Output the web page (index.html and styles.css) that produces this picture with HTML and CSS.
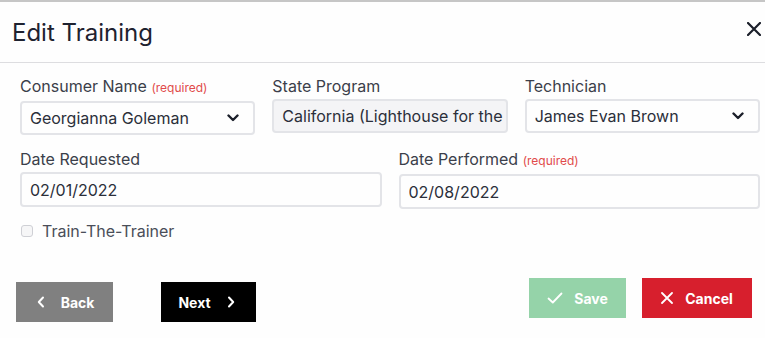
FILE: index.html
```html
<!DOCTYPE html>
<html>
<head>
<title>Edit Training</title>
<link rel="stylesheet" href="styles.css">
</head>
<body>
<div class="modal">
    <div class="modal-header">
        <h1 class="modal-title">Edit Training</h1>
        <button class="close" aria-label="Close">
            <svg width="14" height="14" viewBox="0 0 14 14"><path d="M1 1L13 13M13 1L1 13" stroke="#1b1f2a" stroke-width="2.2" stroke-linecap="round"/></svg>
        </button>
    </div>
    <div class="modal-body">
        <div class="row three">
            <div class="field">
                <label>Consumer Name <span class="req">(required)</span></label>
                <div class="control select">
                    <span>Georgianna Goleman</span>
                    <svg class="chev" width="12" height="8" viewBox="0 0 12 8"><path d="M1.5 1.5L6 6L10.5 1.5" fill="none" stroke="#1b1f2a" stroke-width="2.4" stroke-linecap="round" stroke-linejoin="round"/></svg>
                </div>
            </div>
            <div class="field">
                <label>State Program</label>
                <div class="control readonly"><span>California (Lighthouse for the</span></div>
            </div>
            <div class="field">
                <label>Technician</label>
                <div class="control select">
                    <span>James Evan Brown</span>
                    <svg class="chev" width="12" height="8" viewBox="0 0 12 8"><path d="M1.5 1.5L6 6L10.5 1.5" fill="none" stroke="#1b1f2a" stroke-width="2.4" stroke-linecap="round" stroke-linejoin="round"/></svg>
                </div>
            </div>
        </div>
        <div class="row two">
            <div class="field">
                <label>Date Requested</label>
                <div class="control tall"><span>02/01/2022</span></div>
            </div>
            <div class="field">
                <label>Date Performed <span class="req">(required)</span></label>
                <div class="control tall"><span>02/08/2022</span></div>
            </div>
        </div>
        <div class="check">
            <span class="box"></span>
            <span>Train-The-Trainer</span>
        </div>
    </div>
    <div class="modal-footer">
        <div class="nav">
            <button class="btn back">
                <svg width="8" height="12" viewBox="0 0 8 12"><path d="M6 1.5L1.8 6L6 10.5" fill="none" stroke="#fff" stroke-width="2" stroke-linecap="round" stroke-linejoin="round"/></svg>
                Back
            </button>
            <button class="btn next">
                Next
                <svg width="8" height="12" viewBox="0 0 8 12"><path d="M2 1.5L6.2 6L2 10.5" fill="none" stroke="#fff" stroke-width="2" stroke-linecap="round" stroke-linejoin="round"/></svg>
            </button>
        </div>
        <div class="actions">
            <button class="btn save">
                <svg width="16" height="12" viewBox="0 0 16 12"><path d="M1.5 6.5L5.8 10.5L14.5 1.5" fill="none" stroke="#fff" stroke-width="1.8" stroke-linecap="round" stroke-linejoin="round"/></svg>
                Save
            </button>
            <button class="btn cancel">
                <svg width="12" height="12" viewBox="0 0 12 12"><path d="M1 1L11 11M11 1L1 11" fill="none" stroke="#fff" stroke-width="1.8" stroke-linecap="round"/></svg>
                Cancel
            </button>
        </div>
    </div>
</div>
</body>
</html>
```

FILE: styles.css
```css
body {
    margin: 0;
    background: #fff;
    font-family: Inter, "Liberation Sans", sans-serif;
    color: #2b2f3a;
}
.modal {
    border-top: 2px solid #c6c6c6;
    height: 336px;
    background: #fefefe;
}
.modal-header {
    display: flex;
    align-items: center;
    justify-content: space-between;
    height: 60px;
    padding: 0 3px 0 12px;
    border-bottom: 1px solid #dddde0;
}
.modal-title {
    margin: 0;
    font-size: 24px;
    font-weight: 400;
    color: #1e2230;
}
.close {
    border: 0;
    background: none;
    padding: 0;
    width: 16px;
    height: 16px;
    margin-top: -6px;
    display: flex;
    align-items: center;
    justify-content: center;
}
.modal-body {
    padding: 13px 5px 0 20px;
}
.row {
    display: grid;
    column-gap: 17px;
}
.row.three {
    grid-template-columns: repeat(3, minmax(0, 1fr));
}
.row.two {
    grid-template-columns: repeat(2, minmax(0, 1fr));
    margin-top: 14px;
}
.field label {
    display: block;
    font-size: 16px;
    line-height: 20px;
    color: #3b3f4a;
    margin-bottom: 3px;
}
.req {
    font-size: 12px;
    color: #e14b4b;
}
.control {
    box-sizing: border-box;
    height: 34px;
    border: 2px solid #e3e4e8;
    border-radius: 4px;
    display: flex;
    align-items: center;
    padding: 0 8px;
    font-size: 16px;
    color: #2b2f3a;
    overflow: hidden;
    white-space: nowrap;
}
.control span {
    flex: 1;
    overflow: hidden;
}
.control.select {
    padding-right: 14px;
}
.chev {
    flex: none;
}
.control.readonly {
    background: #f4f4f6;
    padding-right: 0;
}
.control.tall {
    height: 35px;
}
.check {
    display: flex;
    align-items: center;
    gap: 9px;
    margin-top: 12px;
    padding-left: 1px;
    font-size: 16px;
    line-height: 20px;
    color: #4a4e59;
}
.box {
    box-sizing: border-box;
    width: 12px;
    height: 12px;
    border: 1px solid #cfd0d5;
    border-radius: 3px;
    background: #f6f6f7;
}
.modal-footer {
    display: flex;
    justify-content: space-between;
    align-items: flex-start;
    padding: 37px 13px 0 16px;
}
.nav {
    display: flex;
    gap: 48px;
    margin-top: 4px;
}
.actions {
    display: flex;
    gap: 16px;
}
.btn {
    display: flex;
    align-items: center;
    justify-content: center;
    height: 40px;
    border: 0;
    border-radius: 0;
    color: #fff;
    font-family: Inter, "Liberation Sans", sans-serif;
    font-size: 14px;
    font-weight: 700;
    padding: 0;
}
.btn.back {
    width: 97px;
    gap: 16px;
    background: #808080;
    padding-left: 2px;
}
.btn.next {
    width: 95px;
    gap: 16px;
    background: #000;
    padding-right: 4px;
}
.btn.save {
    width: 97px;
    gap: 11px;
    background: #95d3a9;
}
.btn.cancel {
    width: 110px;
    gap: 12px;
    background: #d71f2d;
}
```
